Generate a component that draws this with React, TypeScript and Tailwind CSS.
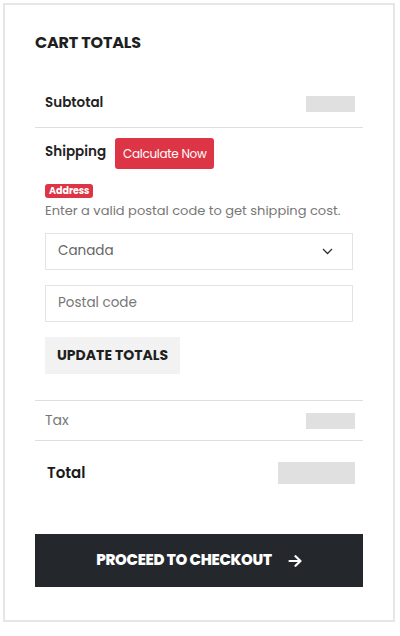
import React from "react";

const font = { fontFamily: "Poppins, Inter, 'Noto Sans', sans-serif" };

export default function App() {
  return (
    <div className="w-[400px] h-[636px] bg-white p-[3px]" style={font}>
      <div className="w-[392px] h-[619px] border-2 border-[#e6e6e6] px-[30px] pt-[26px]">
        <h2 className="text-[16px] leading-[24px] font-bold text-[#1f1f1f] tracking-[-0.2px]">CART TOTALS</h2>
        <div className="mt-[25px] h-[48px] border-b border-[#dedede] flex items-center justify-between pl-[10px] pr-[8px]">
          <span className="text-[13.5px] font-semibold text-[#222]">Subtotal</span>
          <span className="w-[49px] h-[16px] bg-[#e0e0e0]" />
        </div>
        <div className="pl-[10px] pr-[10px] pt-[10px] pb-[26px] border-b border-[#dedede]">
          <div className="flex items-center gap-[9px]">
            <span className="text-[13.5px] font-semibold text-[#222] -mt-[3px]">Shipping</span>
            <button className="h-[31px] px-[8px] rounded-[3px] bg-[#dd3545] text-white text-[12px] tracking-[-0.3px]">Calculate Now</button>
          </div>
          <div className="mt-[15px] flex">
            <span className="h-[14px] px-[4px] rounded-[3px] bg-[#dd3545] text-white text-[9.5px] font-bold leading-[14px]">Address</span>
          </div>
          <p className="mt-[3px] text-[13px] leading-[19px] text-[#777]">Enter a valid postal code to get shipping cost.</p>
          <div className="mt-[13px] h-[37px] border border-[#e3e3e3] flex items-center justify-between pl-[12px] pr-[19px]">
            <span className="text-[13.5px] text-[#666]">Canada</span>
            <svg width="11" height="7" viewBox="0 0 11 7" fill="none" stroke="#333" strokeWidth="1.3">
              <path d="M1 1l4.5 4.5L10 1" />
            </svg>
          </div>
          <div className="mt-[15px] h-[37px] border border-[#e3e3e3] flex items-center pl-[12px]">
            <span className="text-[13.5px] text-[#777]">Postal code</span>
          </div>
          <button className="mt-[15px] h-[37px] px-[12px] bg-[#f2f2f2] text-[14px] font-bold text-[#1f1f1f]">UPDATE TOTALS</button>
        </div>
        <div className="h-[40px] border-b border-[#dedede] flex items-center justify-between pl-[10px] pr-[8px]">
          <span className="text-[14px] text-[#777]">Tax</span>
          <span className="w-[49px] h-[16px] bg-[#e0e0e0]" />
        </div>
        <div className="h-[64px] flex items-center justify-between pl-[12px] pr-[8px]">
          <span className="text-[15px] font-semibold text-[#1a1a1a]">Total</span>
          <span className="w-[77px] h-[22px] bg-[#e0e0e0]" />
        </div>
        <button className="mt-[29px] w-full h-[53px] bg-[#24272b] flex items-center justify-center gap-[16px] text-white text-[15px] font-extrabold tracking-[-0.3px]">
          <span>PROCEED TO CHECKOUT</span>
          <svg width="14" height="12" viewBox="0 0 14 12" fill="none" stroke="white" strokeWidth="2.2" strokeLinecap="round" strokeLinejoin="round">
            <path d="M1.5 6h11M7.5 1.2L12.5 6l-5 4.8" />
          </svg>
        </button>
      </div>
    </div>
  );
}
